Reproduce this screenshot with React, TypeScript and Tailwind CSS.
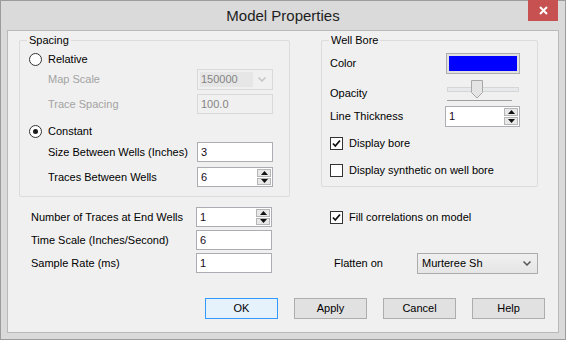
import React from "react";

const font = { fontFamily: '"Liberation Sans", Arial, sans-serif' };

function Radio({ checked }: { checked?: boolean }) {
  return (
    <div className="flex h-[13px] w-[13px] items-center justify-center rounded-full border border-[#333333] bg-white">
      {checked && <div className="h-[5px] w-[5px] rounded-full bg-[#1a1a1a]" />}
    </div>
  );
}

function Check({ checked }: { checked?: boolean }) {
  return (
    <div className="flex h-[13px] w-[13px] items-center justify-center border border-[#333333] bg-white">
      {checked && (
        <svg width="11" height="11" viewBox="0 0 11 11">
          <path d="M2 5.5 L4.3 8 L9 2.5" fill="none" stroke="#111" strokeWidth="1.8" />
        </svg>
      )}
    </div>
  );
}

function TextBox({ value, disabled, w = 76 }: { value: string; disabled?: boolean; w?: number }) {
  return (
    <div
      className={
        disabled
          ? "flex h-[20px] items-center border border-[#d9d9d9] bg-[#f0f0f0] pl-[3px] text-[#838383]"
          : "flex h-[20px] items-center border border-[#abadb3] bg-white pl-[3px] text-[#1a0a1a]"
      }
      style={{ width: w }}
    >
      {value}
    </div>
  );
}

function Arrow({ up }: { up?: boolean }) {
  return (
    <svg width="7" height="4" viewBox="0 0 7 4">
      <polygon points={up ? "3.5,0 7,4 0,4" : "0,0 7,0 3.5,4"} fill="#111" />
    </svg>
  );
}

function Spinner({ value, w = 76, h = 20 }: { value: string; w?: number; h?: number }) {
  return (
    <div className="flex border border-[#abadb3] bg-white" style={{ width: w, height: h }}>
      <div className="flex flex-1 items-center pl-[3px] text-[#1a0a1a]">{value}</div>
      <div className="flex w-[15px] flex-col gap-[1px] py-[1px] pr-[1px]">
        <div className="flex flex-1 items-center justify-center border border-[#b5b5b5] bg-[#e8e8e8]">
          <Arrow up />
        </div>
        <div className="flex flex-1 items-center justify-center border border-[#b5b5b5] bg-[#e8e8e8]">
          <Arrow />
        </div>
      </div>
    </div>
  );
}

function Chevron({ color }: { color: string }) {
  return (
    <svg width="8" height="5" viewBox="0 0 8 5">
      <path d="M0.5 0.5 L4 4 L7.5 0.5" fill="none" stroke={color} strokeWidth="1.5" />
    </svg>
  );
}

function Group({
  title,
  className,
  children,
}: {
  title: string;
  className: string;
  children: React.ReactNode;
}) {
  return (
    <div className={"relative flex flex-col rounded-[2px] border border-[#dcdcdc] " + className}>
      <div className="absolute left-[7px] top-[-8px] bg-[#f0f0f0] px-[2px] leading-[14px] text-black">
        {title}
      </div>
      {children}
    </div>
  );
}

function Button({ label, focused }: { label: string; focused?: boolean }) {
  return (
    <div
      className={
        focused
          ? "flex h-[21px] w-[73px] items-center justify-center border border-[#3399ff] bg-[#e5f1fb] text-black"
          : "flex h-[21px] w-[73px] items-center justify-center border border-[#adadad] bg-[#e1e1e1] text-black"
      }
    >
      {label}
    </div>
  );
}

export default function App() {
  return (
    <div
      className="flex h-[340px] w-[566px] flex-col border border-[#9c9c9c] bg-[#dadada] text-[11px] text-black"
      style={font}
    >
      {/* Title bar */}
      <div className="relative flex h-[29px] shrink-0 items-center justify-center">
        <div className="text-[15px] leading-[15px] text-[#1e1e1e]">Model Properties</div>
        <div className="absolute right-[7px] top-[-1px] flex h-[21px] w-[30px] items-center justify-center bg-[#c75050]">
          <svg width="9" height="9" viewBox="0 0 9 9">
            <path d="M1 1 L8 8 M8 1 L1 8" stroke="#fff" strokeWidth="2" />
          </svg>
        </div>
      </div>

      {/* Client area */}
      <div className="mx-[6px] mb-[6px] flex h-[303px] flex-col border border-[#b9b9b9] bg-[#f0f0f0]">
        {/* Top groups */}
        <div className="mt-[9px] flex items-start pl-[11px]">
          <Group title="Spacing" className="h-[157px] w-[271px] pt-[8px]">
            <div className="flex h-[20px] items-center gap-[6px] pl-[9px]">
              <Radio />
              <span>Relative</span>
            </div>
            <div className="flex h-[21px] items-center pl-[28px]">
              <span className="w-[149px] text-[#a3a3a3]">Map Scale</span>
              <div className="flex h-[21px] w-[76px] items-center border border-[#d9d9d9] bg-[#f0f0f0] p-[2px]">
                <div className="flex h-full w-[53px] items-center bg-[#e6e6e6] pl-[1px] text-[#838383]">
                  150000
                </div>
                <div className="flex flex-1 items-center justify-center">
                  <Chevron color="#c4c4c4" />
                </div>
              </div>
            </div>
            <div className="mt-[4px] flex h-[20px] items-center pl-[28px]">
              <span className="w-[149px] text-[#a3a3a3]">Trace Spacing</span>
              <TextBox value="100.0" disabled />
            </div>
            <div className="mt-[7px] flex h-[20px] items-center gap-[6px] pl-[9px]">
              <Radio checked />
              <span>Constant</span>
            </div>
            <div className="mt-[1px] flex h-[20px] items-center pl-[28px]">
              <span className="w-[149px]">Size Between Wells (Inches)</span>
              <TextBox value="3" />
            </div>
            <div className="mt-[5px] flex h-[20px] items-center pl-[28px]">
              <span className="w-[149px]">Traces Between Wells</span>
              <Spinner value="6" />
            </div>
          </Group>

          <Group title="Well Bore" className="ml-[31px] h-[147px] w-[217px] pl-[8px] pt-[12px]">
            <div className="flex h-[21px] items-center">
              <span className="w-[116px]">Color</span>
              <div className="flex h-[21px] w-[74px] border border-[#adadad] bg-[#e1e1e1] p-[2px]">
                <div className="flex-1 bg-[#0000ff]" />
              </div>
            </div>
            <div className="mt-[6px] flex h-[21px] items-start">
              <span className="mt-[5px] w-[117px]">Opacity</span>
              <div className="flex w-[72px] flex-col">
                <div className="relative flex h-[19px] items-center">
                  <div className="h-[5px] w-full border border-[#d6d6d6] bg-[#e7eaea]" />
                  <svg
                    className="absolute left-[24px] top-0"
                    width="12"
                    height="19"
                    viewBox="0 0 12 19"
                  >
                    <polygon
                      points="0.5,0.5 11.5,0.5 11.5,12.5 6,18 0.5,12.5"
                      fill="#e4e4e4"
                      stroke="#a8a8a8"
                    />
                  </svg>
                </div>
                <div className="mt-[1px] h-[1px] w-[65px] bg-[#a0a0a0]" />
              </div>
            </div>
            <div className="mt-[5px] flex h-[21px] items-center">
              <span className="w-[115px]">Line Thickness</span>
              <Spinner value="1" w={75} h={21} />
            </div>
            <div className="mt-[6px] flex h-[20px] items-center gap-[6px]">
              <Check checked />
              <span>Display bore</span>
            </div>
            <div className="mt-[7px] flex h-[20px] items-center gap-[6px]">
              <Check />
              <span>Display synthetic on well bore</span>
            </div>
          </Group>
        </div>

        {/* Bottom section */}
        <div className="mt-[10px] flex items-start">
          <div className="flex flex-col gap-[3px] pl-[23px]">
            <div className="flex h-[20px] items-center">
              <span className="w-[165px]">Number of Traces at End Wells</span>
              <Spinner value="1" />
            </div>
            <div className="flex h-[20px] items-center">
              <span className="w-[165px]">Time Scale (Inches/Second)</span>
              <TextBox value="6" />
            </div>
            <div className="flex h-[20px] items-center">
              <span className="w-[165px]">Sample Rate (ms)</span>
              <TextBox value="1" />
            </div>
          </div>
          <div className="ml-[58px] flex flex-col">
            <div className="flex h-[20px] items-center gap-[6px]">
              <Check checked />
              <span>Fill correlations on model</span>
            </div>
            <div className="mt-[26px] flex h-[21px] items-center pl-[4px]">
              <span className="w-[83px]">Flatten on</span>
              <div className="flex h-[21px] w-[121px] items-center border border-[#acacac] bg-gradient-to-b from-[#f0f0f0] to-[#e5e5e5] pl-[4px] pr-[6px]">
                <span className="flex-1">Murteree Sh</span>
                <Chevron color="#555555" />
              </div>
            </div>
          </div>
        </div>

        {/* Buttons */}
        <div className="mt-[24px] flex justify-end gap-[16px] pr-[13px]">
          <Button label="OK" focused />
          <Button label="Apply" />
          <Button label="Cancel" />
          <Button label="Help" />
        </div>
      </div>
    </div>
  );
}
